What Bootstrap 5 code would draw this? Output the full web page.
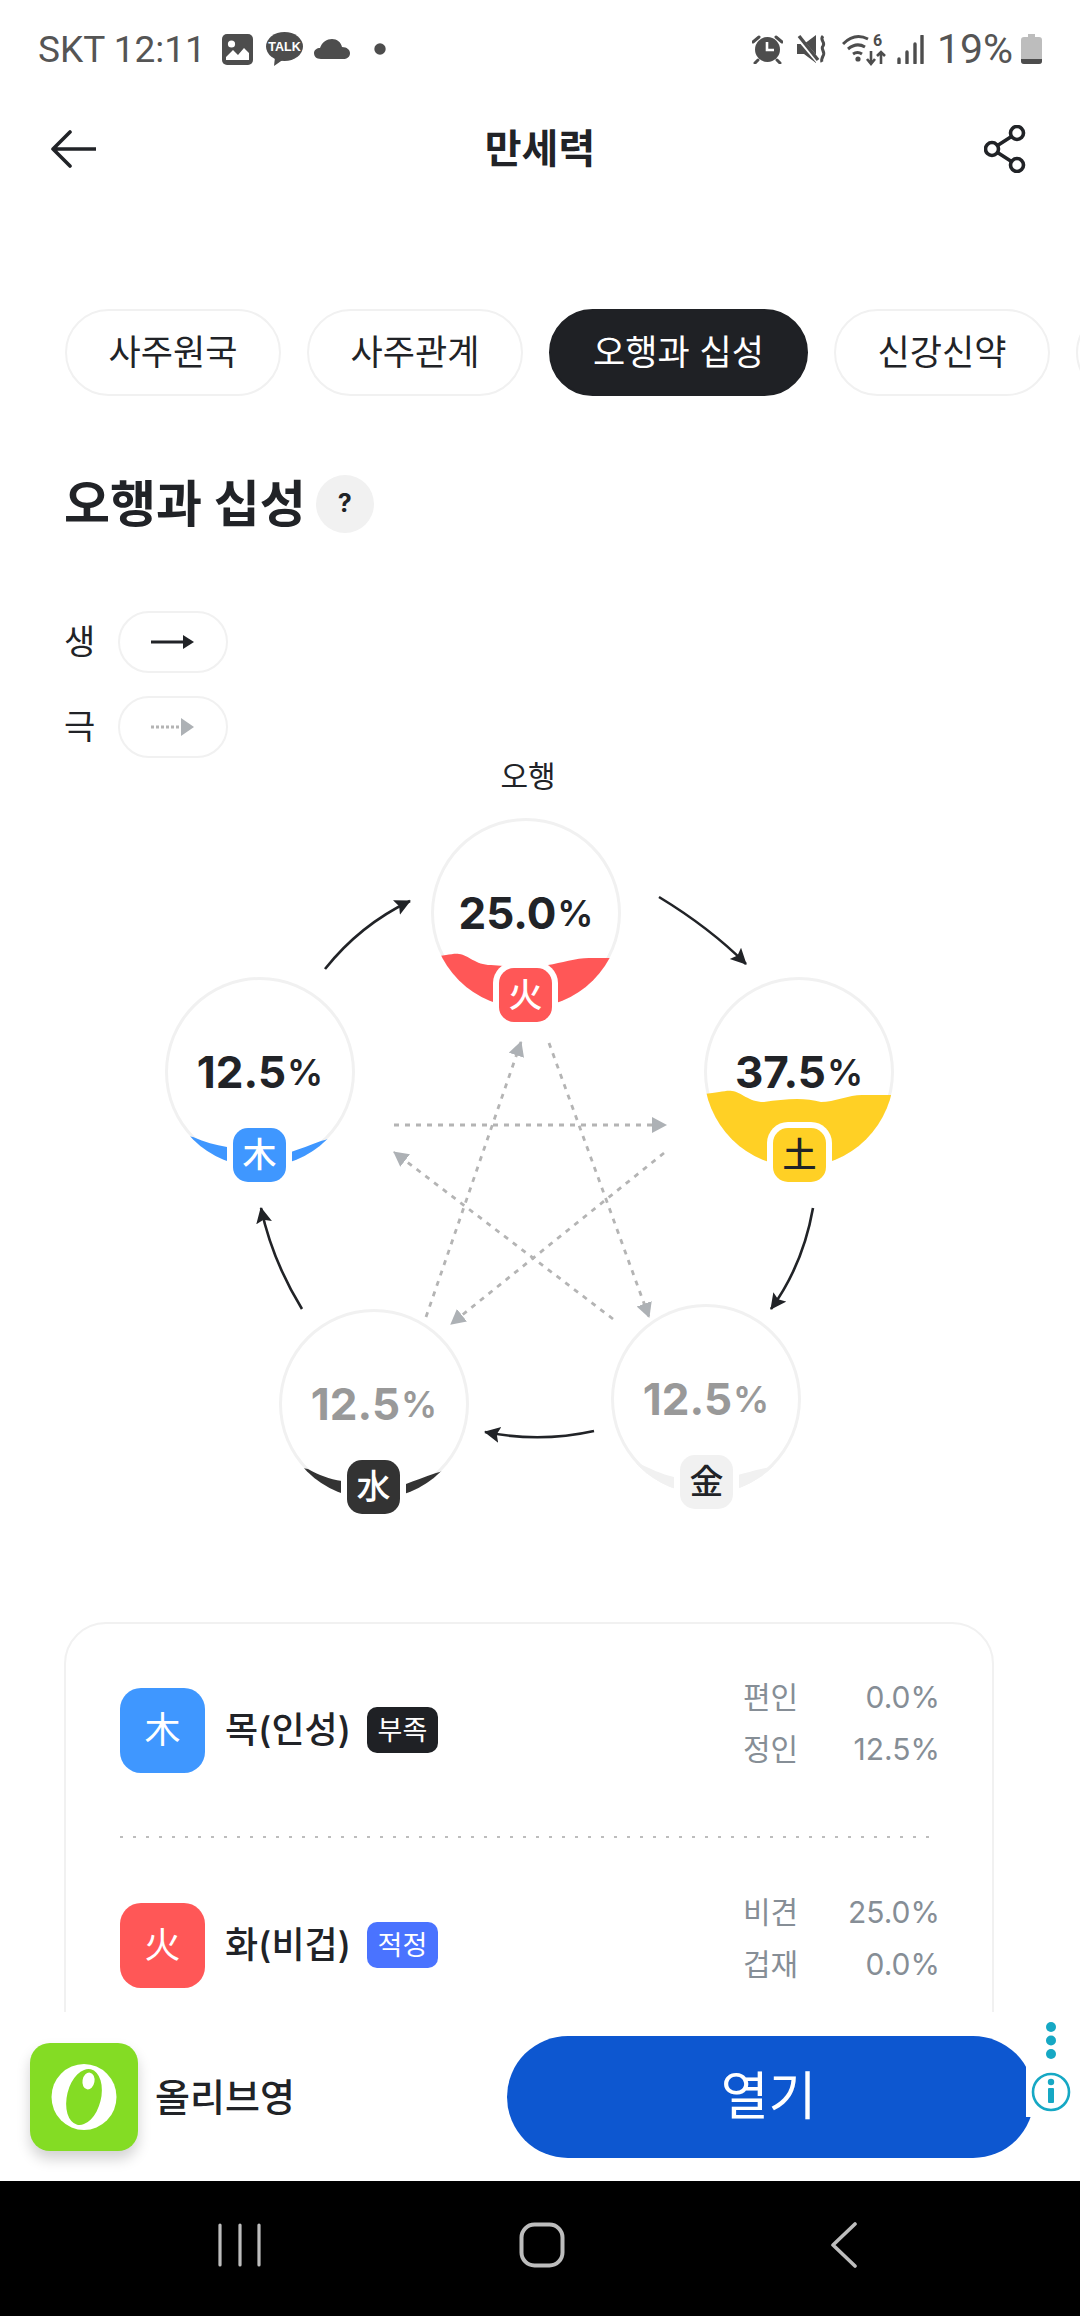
<!DOCTYPE html>
<html lang="ko">
  <head>
    <meta charset="utf-8" />
    <meta name="viewport" content="width=device-width, initial-scale=1" />
    <title>만세력</title>
    <link href="https://cdn.jsdelivr.net/npm/bootstrap@5.3.3/dist/css/bootstrap.min.css" rel="stylesheet" />
    <style>
      html, body { margin: 0; background: #fff; }
      body { font-family: Inter, "Noto Sans CJK KR", sans-serif; color: #212327; }
      .screen { width: 1080px; height: 2316px; overflow: hidden; }

      /* status bar */
      .status-bar { height: 96px; padding: 2px 38px 0; color: #555; }
      .status-text { font-family: Roboto, sans-serif; font-size: 37px; line-height: 1; white-space: nowrap; }
      .status-batt { font-size: 41px; margin-left: 13px; }

      /* header */
      .top-bar { height: 106px; padding: 0 54px 0 50px; }
      .top-title { font-size: 40px; font-weight: 700; line-height: 1; }

      /* tabs */
      .tab-row { padding: 107px 0 0 65px; gap: 26px; width: 1200px; }
      .tab-chip { height: 87px; width: 216px; flex: none; border: 2px solid #f1f1f1; border-radius: 44px; font-size: 35px; line-height: 1; background: #fff; }
      .tab-chip.is-on { width: 259px; background: #1f2125; border-color: #1f2125; color: #fff; }

      .side-pad { padding: 0 86px 0 64px; }
      .page-head { margin-top: 79px; height: 58px; }
      .page-head h2 { font-size: 50px; font-weight: 700; line-height: 1; margin: 0; }
      .help-dot { width: 58px; height: 58px; margin-left: 10px; background: #f1f1f1; font-size: 25px; font-weight: 700; }

      .legend-list { margin-top: 78px; gap: 23px; }
      .legend-word { width: 54px; font-size: 34px; line-height: 1; }
      .legend-pill { width: 110px; height: 62px; border: 2px solid #f1f1f1; border-radius: 31px; }

      /* five elements diagram */
      .wheel { position: relative; width: 1080px; height: 864px; }
      .wheel-label { position: absolute; left: 478px; top: 4px; width: 100px; text-align: center; font-size: 30px; line-height: 28px; }
      .wheel-lines { position: absolute; left: 0; top: 0; }
      .el-node { position: absolute; width: 190px; height: 190px; }
      .el-ring { width: 190px; height: 190px; overflow: hidden; border-radius: 50%; box-shadow: inset 0 0 0 3px #f1f1f1; position: relative; }
      .el-ring svg { position: absolute; left: 0; top: 0; }
      .el-pct { position: absolute; inset: 0; font-size: 44px; font-weight: 700; line-height: 1; }
      .el-pct span { font-size: 36px; font-weight: 600; margin-left: 1px; }
      .el-pct.is-low { color: #999; }
      .el-tag { position: absolute; left: 68px; width: 53px; height: 54px; border-radius: 15px; font-size: 34px; font-weight: 500; line-height: 1; box-shadow: 0 0 0 6px #fff; }
      .node-fire { left: 431px; top: 60px; }
      .node-wood { left: 165px; top: 219px; }
      .node-earth { left: 704px; top: 219px; }
      .node-water { left: 279px; top: 551px; }
      .node-metal { left: 611px; top: 546px; }
      .node-fire .el-tag { top: 150px; }
      .node-wood .el-tag { top: 151px; }
      .node-earth .el-tag { top: 151px; left: 69px; }
      .node-water .el-tag { top: 151px; }
      .node-metal .el-tag { top: 151px; left: 69px; }
      .c-fire { background: #ff5757; color: #fff; }
      .c-wood { background: #3f97ff; color: #fff; }
      .c-earth { background: #ffd025; color: #212327; }
      .c-water { background: #333; color: #fff; }
      .c-metal { background: #f1f1f1; color: #212327; }

      /* summary card */
      .sum-card { width: 930px; border: 2px solid #f1f1f1; border-radius: 42px; padding: 0 52px 0 54px; background: #fff; }
      .sum-row { height: 214px; }
      .sum-row.is-first { height: 212px; }
      .sum-dots { height: 2px; margin-right: 6px; background: repeating-linear-gradient(90deg, #bdbdbd 0 3px, transparent 3px 13px); }
      .sum-icon { width: 85px; height: 85px; border-radius: 21px; font-size: 36px; line-height: 1; }
      .sum-name { font-size: 36px; font-weight: 500; line-height: 1; margin-left: 20px; }
      .sum-state { width: 71px; height: 46px; border-radius: 10px; margin-left: 16px; font-size: 27px; line-height: 1; color: #fff; }
      .state-low { background: #1f2125; }
      .state-ok { background: #4a73ff; }
      .sum-figs { font-size: 30px; line-height: 52px; color: #868e96; margin-top: -15px; }
      .sum-figs b { font-weight: 400; width: 55px; white-space: nowrap; display: inline-block; }
      .sum-figs span { display: inline-block; width: 142px; text-align: right; }

      /* ad */
      .ad-bar { height: 169px; background: #fff; padding-left: 30px; position: relative; }
      .ad-icon { width: 108px; height: 108px; border-radius: 20px; background: #84dc24; box-shadow: 0 8px 14px rgba(0, 0, 0, .18); flex: none; }
      .ad-name { font-size: 38px; font-weight: 500; line-height: 1; margin-left: 17px; }
      .ad-open { width: 527px; height: 122px; border-radius: 61px; border: 0; padding: 0 4px 0 0; background: #0d57d0; color: #fff; font-size: 52px; line-height: 1; flex: none; margin-left: auto; margin-right: -4px; }
      .ad-side { width: 54px; height: 105px; margin-left: -4px; background: #fff; flex: none; align-self: flex-start; position: relative; }

      /* android nav */
      .soft-keys { height: 135px; background: #000; padding: 0 0 7px 89px; }
      .soft-key { width: 302px; }
    </style>
  </head>
  <body>
    <div class="screen d-flex flex-column">
      <div class="status-bar d-flex align-items-center flex-shrink-0">
        <span class="status-text">SKT 12:11</span>
        <svg class="ms-3" width="31" height="31" viewBox="0 0 31 31"><rect width="31" height="31" rx="5" fill="#4d4d4d"/><circle cx="9.5" cy="10" r="3.6" fill="#fff"/><path d="M4 23l7-7 5 5 6-7 5 5v7H4z" fill="#fff"/></svg>
        <svg style="margin-left:13px" width="37" height="34" viewBox="0 0 37 34"><ellipse cx="18.5" cy="14.5" rx="18.5" ry="14.5" fill="#4d4d4d"/><path d="M9 25L8 34l10-7z" fill="#4d4d4d"/><text x="18.5" y="19" text-anchor="middle" font-family="Liberation Sans" font-weight="700" font-size="12.5" fill="#fff">TALK</text></svg>
        <svg style="margin-left:11px" width="36" height="20" viewBox="0 0 36 20"><path d="M7 20C2 20 0 17 0 14c0-3 3-5 6-5C8 3 13 0 18 0c5 0 9 3 10 8 5 0 8 3 8 6 0 4-3 6-7 6z" fill="#4d4d4d"/></svg>
        <svg style="margin-left:24px" width="12" height="12" viewBox="0 0 12 12"><circle cx="6" cy="6" r="5.7" fill="#4d4d4d"/></svg>

        <svg class="ms-auto" width="31" height="30" viewBox="0 0 31 30"><circle cx="15.5" cy="15.5" r="12.5" fill="#4d4d4d"/><path d="M15 8v8h7" fill="none" stroke="#fff" stroke-width="2.6"/><path d="M1 8l6-5M30 8l-6-5M6 26l-3 3M25 26l3 3" stroke="#4d4d4d" stroke-width="3" stroke-linecap="round"/></svg>
        <svg style="margin-left:14px" width="30" height="30" viewBox="0 0 30 30"><path d="M0 10h7L19 1v28L7 20H0z" fill="#4d4d4d"/><path d="M1 3l20 24" stroke="#fff" stroke-width="5"/><path d="M2 2l19 24" stroke="#4d4d4d" stroke-width="3.4"/><path d="M26 2c-4 4 3 6 0 10-3 3 3 6 0 10-1 2-2 4-1 6" fill="none" stroke="#4d4d4d" stroke-width="3"/></svg>
        <svg style="margin-left:15px" width="45" height="40" viewBox="0 -4 45 40"><path d="M1 11C9 3 18 2 26 6M6 16c6-5 12-5 17-2M11 21c3-2 6-2 9 0" fill="none" stroke="#4d4d4d" stroke-width="3"/><circle cx="16" cy="26" r="2.6" fill="#4d4d4d"/><text x="31" y="13" font-family="Roboto" font-weight="700" font-size="16" fill="#4d4d4d">6</text><path d="M29 18v12M25 26l4 5 4-5M39 31v-11M35 23l4-4 4 4" fill="none" stroke="#4d4d4d" stroke-width="2.6"/></svg>
        <svg style="margin-left:10px" width="27" height="29" viewBox="0 0 27 29"><path d="M2 24v4M10 17v11M18 9v19M25 1v27" stroke="#4d4d4d" stroke-width="3.4" stroke-linecap="round"/></svg>
        <span class="status-text status-batt">19%</span>
        <svg style="margin-left:8px" width="21" height="30" viewBox="0 0 21 30"><path d="M7 0h7v3h4a3 3 0 0 1 3 3v21a3 3 0 0 1-3 3H3a3 3 0 0 1-3-3V6a3 3 0 0 1 3-3h4z" fill="#bdbdbd"/><path d="M0 25h21v2a3 3 0 0 1-3 3H3a3 3 0 0 1-3-3z" fill="#4d4d4d"/></svg>
      </div>

      <div class="top-bar d-flex align-items-center justify-content-between flex-shrink-0">
        <svg width="46" height="38" viewBox="0 0 46 38"><path d="M20 2L3 19l17 17M3 19h43" fill="none" stroke="#212327" stroke-width="3.6" stroke-linecap="round" stroke-linejoin="round"/></svg>
        <div class="top-title">만세력</div>
        <svg width="42" height="48" viewBox="0 0 42 48"><g fill="none" stroke="#212327" stroke-width="3.6"><circle cx="33" cy="8" r="6.5"/><circle cx="8" cy="24" r="6.5"/><circle cx="33" cy="40" r="6.5"/><path d="M27.500 11.500l-14 9M13.500 27.500l14 9"/></g></svg>
      </div>

      <div class="flex-grow-1 overflow-hidden" style="min-height:0">
        <div class="tab-row d-flex">
          <div class="tab-chip d-flex align-items-center justify-content-center">사주원국</div>
          <div class="tab-chip d-flex align-items-center justify-content-center">사주관계</div>
          <div class="tab-chip is-on d-flex align-items-center justify-content-center">오행과 십성</div>
          <div class="tab-chip d-flex align-items-center justify-content-center">신강신약</div>
          <div class="tab-chip"></div>
        </div>

        <div class="side-pad">
          <div class="page-head d-flex align-items-center">
            <h2>오행과 십성</h2>
            <div class="help-dot rounded-circle d-flex align-items-center justify-content-center">?</div>
          </div>
          <div class="legend-list d-flex flex-column">
            <div class="d-flex align-items-center">
              <div class="legend-word">생</div>
              <div class="legend-pill d-flex align-items-center justify-content-center">
                <svg width="44" height="16" viewBox="0 0 44 16"><path d="M0 8h34" stroke="#212327" stroke-width="2.8"/><path d="M32 1l11 7-11 7z" fill="#212327"/></svg>
              </div>
            </div>
            <div class="d-flex align-items-center">
              <div class="legend-word">극</div>
              <div class="legend-pill d-flex align-items-center justify-content-center">
                <svg width="44" height="18" viewBox="0 0 44 18"><path d="M0 9h31" stroke="#b4b4b4" stroke-width="2.800" stroke-dasharray="3 2"/><path d="M30 0l13 9-13 9z" fill="#adb1b5"/></svg>
              </div>
            </div>
          </div>
        </div>

        <div class="wheel">
          <div class="wheel-label">오행</div>
          <svg class="wheel-lines" width="1080" height="864" viewBox="0 758 1080 864">
            <defs>
              <marker id="headDark" markerUnits="userSpaceOnUse" markerWidth="20" markerHeight="20" refX="15" refY="8" orient="auto"><path d="M0 0L16 8L0 16L3 8z" fill="#212327"/></marker>
              <marker id="headGrey" markerUnits="userSpaceOnUse" markerWidth="20" markerHeight="20" refX="14" refY="8" orient="auto"><path d="M0 0L15 8L0 16z" fill="#adb1b5"/></marker>
            </defs>
            <g fill="none" stroke="#212327" stroke-width="2.6">
              <path d="M325 969Q360 925 410 901" marker-end="url(#headDark)"/>
              <path d="M659 897Q710 928 746 964" marker-end="url(#headDark)"/>
              <path d="M813 1208Q803 1265 771 1309" marker-end="url(#headDark)"/>
              <path d="M594 1431Q540 1443 485 1432" marker-end="url(#headDark)"/>
              <path d="M302 1309Q272 1260 261 1208" marker-end="url(#headDark)"/>
            </g>
            <g fill="none" stroke="#b4b4b4" stroke-width="2.800" stroke-dasharray="5 6">
              <path d="M394 1125H666" marker-end="url(#headGrey)"/>
              <path d="M549 1043L649 1317" marker-end="url(#headGrey)"/>
              <path d="M664 1153L451 1324" marker-end="url(#headGrey)"/>
              <path d="M613 1319L394 1152" marker-end="url(#headGrey)"/>
              <path d="M426 1317L521 1042" marker-end="url(#headGrey)"/>
            </g>
          </svg>

          <div class="el-node node-fire">
            <div class="el-ring">
              <svg width="190" height="190" viewBox="0 0 190 190"><path d="M0 139C14 138 22 135 28 136C38 137 44 147 60 147C80 149 100 149 117 147C130 145 145 140 158 140L190 140V190H0z" fill="#ff5757"/></svg>
              <div class="el-pct d-flex align-items-center justify-content-center">25.0<span>%</span></div>
            </div>
            <div class="el-tag c-fire d-flex align-items-center justify-content-center">火</div>
          </div>
          <div class="el-node node-wood">
            <div class="el-ring">
              <svg width="190" height="190" viewBox="0 0 190 190"><path d="M0 155L28 160C40 165 50 168 62 170L126 175C135 172 145 168 156 164L190 155V190H0z" fill="#3f97ff"/></svg>
              <div class="el-pct d-flex align-items-center justify-content-center">12.5<span>%</span></div>
            </div>
            <div class="el-tag c-wood d-flex align-items-center justify-content-center">木</div>
          </div>
          <div class="el-node node-earth">
            <div class="el-ring">
              <svg width="190" height="190" viewBox="0 0 190 190"><path d="M0 117C14 116 22 113 28 114C38 115 44 125 60 125C80 122 100 120 117 125C130 125 145 118 158 118L190 118V190H0z" fill="#ffd025"/></svg>
              <div class="el-pct d-flex align-items-center justify-content-center">37.5<span>%</span></div>
            </div>
            <div class="el-tag c-earth d-flex align-items-center justify-content-center">土</div>
          </div>
          <div class="el-node node-water">
            <div class="el-ring">
              <svg width="190" height="190" viewBox="0 0 190 190"><path d="M0 155L29 160C40 166 50 170 63 172L127 175C135 172 145 168 157 164L190 155V190H0z" fill="#333"/></svg>
              <div class="el-pct is-low d-flex align-items-center justify-content-center">12.5<span>%</span></div>
            </div>
            <div class="el-tag c-water d-flex align-items-center justify-content-center">水</div>
          </div>
          <div class="el-node node-metal">
            <div class="el-ring">
              <svg width="190" height="190" viewBox="0 0 190 190"><path d="M0 155L27 159C40 165 50 170 63 173L127 171C135 169 145 166 159 163L190 155V190H0z" fill="#f1f1f1"/></svg>
              <div class="el-pct is-low d-flex align-items-center justify-content-center">12.5<span>%</span></div>
            </div>
            <div class="el-tag c-metal d-flex align-items-center justify-content-center">金</div>
          </div>
        </div>

        <div class="side-pad">
          <div class="sum-card">
            <div class="sum-row is-first d-flex align-items-center">
              <div class="sum-icon c-wood d-flex align-items-center justify-content-center">木</div>
              <div class="sum-name">목(인성)</div>
              <div class="sum-state state-low d-flex align-items-center justify-content-center">부족</div>
              <div class="sum-figs ms-auto">
                <div><b>편인</b><span>0.0%</span></div>
                <div><b>정인</b><span>12.5%</span></div>
              </div>
            </div>
            <div class="sum-dots"></div>
            <div class="sum-row d-flex align-items-center">
              <div class="sum-icon c-fire d-flex align-items-center justify-content-center">火</div>
              <div class="sum-name">화(비겁)</div>
              <div class="sum-state state-ok d-flex align-items-center justify-content-center">적정</div>
              <div class="sum-figs ms-auto">
                <div><b>비견</b><span>25.0%</span></div>
                <div><b>겁재</b><span>0.0%</span></div>
              </div>
            </div>
          </div>
        </div>
      </div>

      <div class="ad-bar d-flex align-items-center flex-shrink-0">
        <div class="ad-icon d-flex align-items-center justify-content-center">
          <svg width="108" height="108" viewBox="0 0 108 108"><ellipse cx="54" cy="54" rx="32.500" ry="33" fill="#fff"/><ellipse cx="54" cy="54" rx="17" ry="28.500" transform="rotate(14 54 54)" fill="#84dc24"/><ellipse cx="58.500" cy="38" rx="6" ry="8.500" transform="rotate(10 58.500 38)" fill="#fff"/></svg>
        </div>
        <div class="ad-name">올리브영</div>
        <button type="button" class="btn ad-open">열기</button>
        <div class="ad-side">
          <svg width="54" height="105" viewBox="0 0 54 105"><g fill="#16a8c4"><circle cx="25" cy="15" r="5"/><circle cx="25" cy="28.500" r="5"/><circle cx="25" cy="42" r="5"/><circle cx="25" cy="70" r="3.200"/><rect x="22" y="76" width="6" height="15" rx="1"/></g><circle cx="25" cy="80" r="18" fill="none" stroke="#16a8c4" stroke-width="2.600"/></svg>
        </div>
      </div>

      <div class="soft-keys d-flex align-items-center flex-shrink-0">
        <div class="soft-key d-flex justify-content-center">
          <svg width="44" height="44" viewBox="0 0 44 44"><path d="M2 2v40M22 2v40M41 2v40" stroke="#bdbdbd" stroke-width="3.200" stroke-linecap="round"/></svg>
        </div>
        <div class="soft-key d-flex justify-content-center">
          <svg width="46" height="46" viewBox="0 0 46 46"><rect x="2.500" y="2.500" width="41" height="41" rx="13" fill="none" stroke="#bdbdbd" stroke-width="4"/></svg>
        </div>
        <div class="soft-key d-flex justify-content-center">
          <svg width="28" height="46" viewBox="0 0 28 46"><path d="M25 2L3 23l22 21" fill="none" stroke="#bdbdbd" stroke-width="3.600" stroke-linecap="round" stroke-linejoin="round"/></svg>
        </div>
      </div>
    </div>

    <script src="https://cdn.jsdelivr.net/npm/bootstrap@5.3.3/dist/js/bootstrap.bundle.min.js"></script>
  </body>
</html>
